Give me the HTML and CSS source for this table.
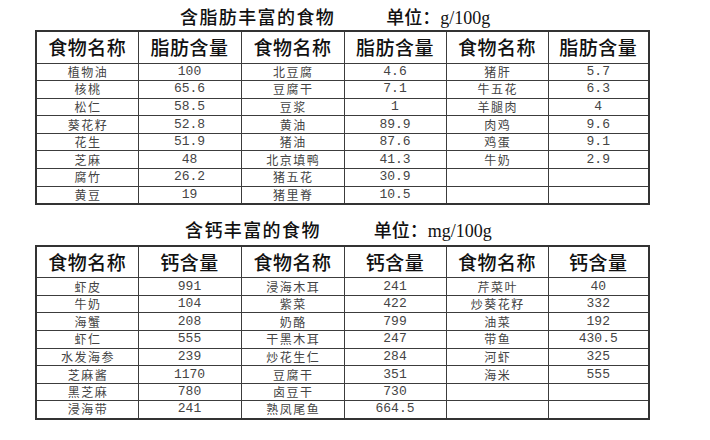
FILE: index.html
```html
<!DOCTYPE html>
<html lang="zh">
<head>
<meta charset="utf-8">
<link rel="stylesheet" href="styles.css">
</head>
<body>
<div class="page">
  <section class="block block-fat">
    <div class="title">
      <span class="title-main">含脂肪丰富的食物</span>
      <span class="title-unit">单位：g/100g</span>
    </div>
    <table class="grid">
      <colgroup><col class="c1"><col class="c2"><col class="c3"><col class="c4"><col class="c5"><col class="c6"></colgroup>
      <thead>
        <tr><th>食物名称</th><th>脂肪含量</th><th>食物名称</th><th>脂肪含量</th><th>食物名称</th><th>脂肪含量</th></tr>
      </thead>
      <tbody>
        <tr><td>植物油</td><td class="n">100</td><td>北豆腐</td><td class="n">4.6</td><td>猪肝</td><td class="n">5.7</td></tr>
        <tr><td>核桃</td><td class="n">65.6</td><td>豆腐干</td><td class="n">7.1</td><td>牛五花</td><td class="n">6.3</td></tr>
        <tr><td>松仁</td><td class="n">58.5</td><td>豆浆</td><td class="n">1</td><td>羊腿肉</td><td class="n">4</td></tr>
        <tr><td>葵花籽</td><td class="n">52.8</td><td>黄油</td><td class="n">89.9</td><td>肉鸡</td><td class="n">9.6</td></tr>
        <tr><td>花生</td><td class="n">51.9</td><td>猪油</td><td class="n">87.6</td><td>鸡蛋</td><td class="n">9.1</td></tr>
        <tr><td>芝麻</td><td class="n">48</td><td>北京填鸭</td><td class="n">41.3</td><td>牛奶</td><td class="n">2.9</td></tr>
        <tr><td>腐竹</td><td class="n">26.2</td><td>猪五花</td><td class="n">30.9</td><td></td><td></td></tr>
        <tr><td>黄豆</td><td class="n">19</td><td>猪里脊</td><td class="n">10.5</td><td></td><td></td></tr>
      </tbody>
    </table>
  </section>
  <section class="block block-ca">
    <div class="title">
      <span class="title-main">含钙丰富的食物</span>
      <span class="title-unit">单位：mg/100g</span>
    </div>
    <table class="grid">
      <colgroup><col class="c1"><col class="c2"><col class="c3"><col class="c4"><col class="c5"><col class="c6"></colgroup>
      <thead>
        <tr><th>食物名称</th><th>钙含量</th><th>食物名称</th><th>钙含量</th><th>食物名称</th><th>钙含量</th></tr>
      </thead>
      <tbody>
        <tr><td>虾皮</td><td class="n">991</td><td>浸海木耳</td><td class="n">241</td><td>芹菜叶</td><td class="n">40</td></tr>
        <tr><td>牛奶</td><td class="n">104</td><td>紫菜</td><td class="n">422</td><td>炒葵花籽</td><td class="n">332</td></tr>
        <tr><td>海蟹</td><td class="n">208</td><td>奶酪</td><td class="n">799</td><td>油菜</td><td class="n">192</td></tr>
        <tr><td>虾仁</td><td class="n">555</td><td>干黑木耳</td><td class="n">247</td><td>带鱼</td><td class="n">430.5</td></tr>
        <tr><td>水发海参</td><td class="n">239</td><td>炒花生仁</td><td class="n">284</td><td>河虾</td><td class="n">325</td></tr>
        <tr><td>芝麻酱</td><td class="n">1170</td><td>豆腐干</td><td class="n">351</td><td>海米</td><td class="n">555</td></tr>
        <tr><td>黑芝麻</td><td class="n">780</td><td>卤豆干</td><td class="n">730</td><td></td><td></td></tr>
        <tr><td>浸海带</td><td class="n">241</td><td>熟凤尾鱼</td><td class="n">664.5</td><td></td><td></td></tr>
      </tbody>
    </table>
  </section>
</div>
</body>
</html>
```
FILE: styles.css
```css
html, body {
  margin: 0;
  padding: 0;
  background: #ffffff;
}
body {
  width: 710px;
  height: 440px;
  overflow: hidden;
  font-family: "Noto Sans CJK SC", sans-serif;
  color: #222;
}
.page {
  padding-left: 35px;
  padding-top: 7px;
}
.title {
  display: flex;
  align-items: center;
  height: 23px;
  font-family: "Liberation Serif", "Noto Sans CJK SC", serif;
  font-size: 18px;
  font-weight: 500;
  color: #111;
  line-height: 23px;
}
.title-main {
  letter-spacing: 1.4px;
}
.block-fat .title {
  padding-left: 145px;
}
.block-fat .title-unit {
  margin-left: 51px;
}
.block-ca {
  margin-top: 15px;
}
.block-ca .title {
  padding-left: 150px;
  margin-bottom: 2px;
}
.block-ca .title-unit {
  margin-left: 53px;
}
.grid {
  border-collapse: collapse;
  table-layout: fixed;
  width: 613px;
  border: 2px solid #333;
}
.c1 { width: 102px; }
.c2 { width: 103px; }
.c3 { width: 103px; }
.c4 { width: 102px; }
.c5 { width: 102px; }
.c6 { width: 101px; }
.grid th,
.grid td {
  border: 1px solid #3c3c3c;
  padding: 0;
  text-align: center;
  vertical-align: middle;
  overflow: hidden;
  white-space: nowrap;
}
.grid thead tr {
  height: 32px;
}
.grid th {
  font-size: 19px;
  font-weight: 500;
  color: #111;
  letter-spacing: 0.5px;
  line-height: 24px;
}
.grid tbody tr {
  height: 17.6px;
}
.grid td {
  font-size: 12px;
  letter-spacing: 1.5px;
  padding-left: 1.5px;
  line-height: 14px;
  color: #444;
}
.grid td.n {
  font-family: "Liberation Mono", monospace;
  font-size: 13px;
  letter-spacing: 0;
  padding-left: 0;
}
```
